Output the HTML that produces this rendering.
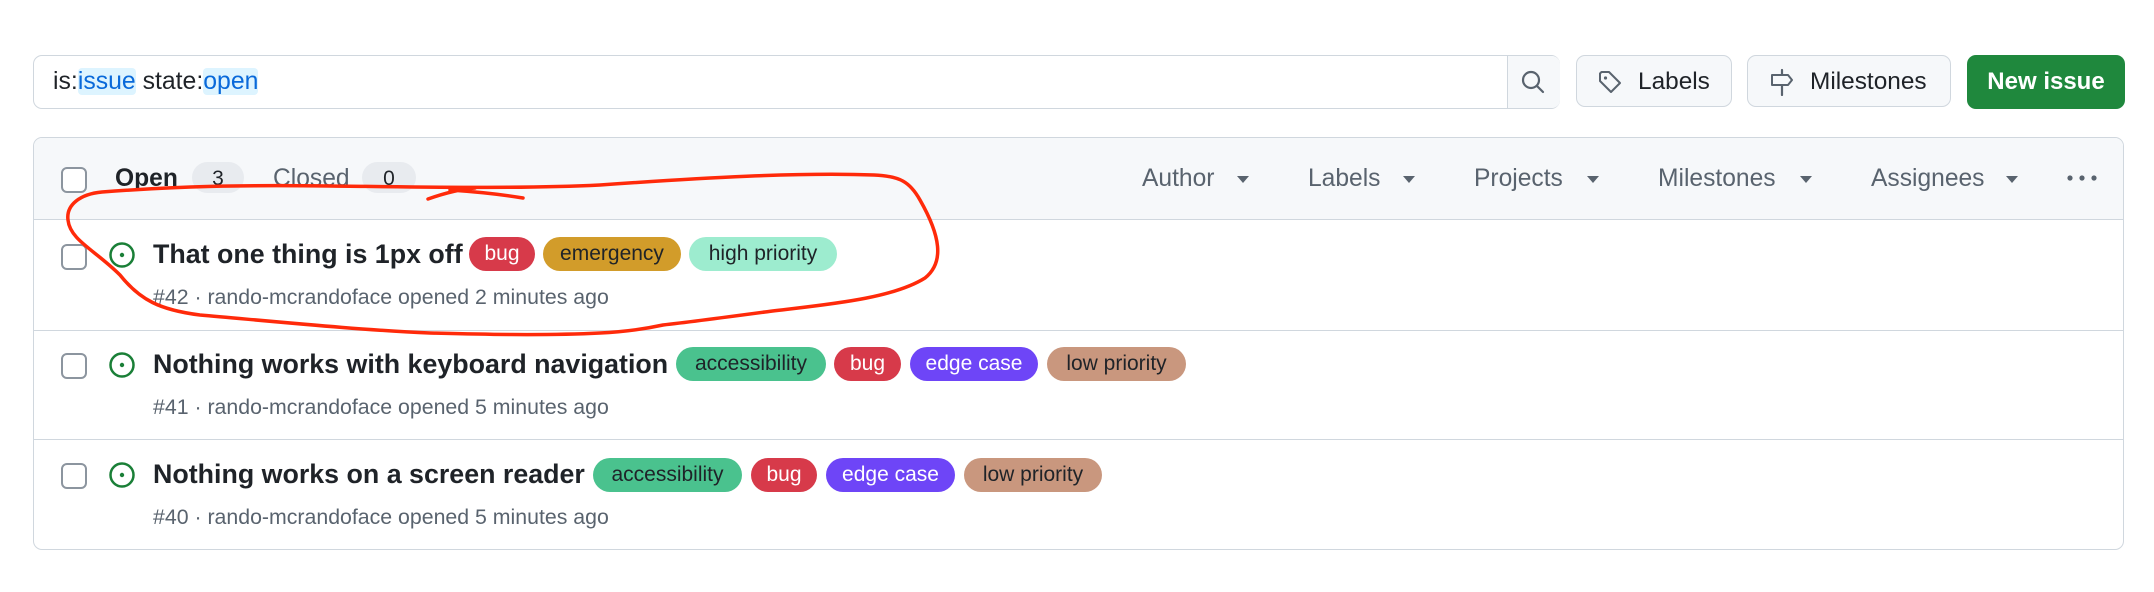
<!DOCTYPE html>
<html><head><meta charset="utf-8"><style>
html,body{margin:0;padding:0;background:#fff;width:2154px;height:592px;overflow:hidden;position:relative;font-family:"Liberation Sans",Arial,sans-serif;color:#1f2328}
.a{position:absolute;white-space:nowrap}
.btn{position:absolute;top:55px;height:52px;border:1px solid #d0d7de;border-radius:9px;background:#f6f8fa;box-sizing:border-box}
.lbl{position:absolute;height:34px;border-radius:17px;font-size:21px;line-height:34px;text-align:center;white-space:nowrap}
.cb{position:absolute;left:61px;width:26px;height:26px;border:2px solid #8c959f;border-radius:6px;box-sizing:border-box;background:#fff}
.ttl{position:absolute;left:153px;font-size:26.8px;font-weight:bold;white-space:nowrap;line-height:30px}
.meta{position:absolute;left:153px;font-size:21.3px;color:#59636e;white-space:nowrap;line-height:24px}
.hd{position:absolute;top:166px;font-size:24.6px;color:#59636e;line-height:26px;white-space:nowrap}
.car{position:absolute;top:176px;width:0;height:0;border-left:6px solid transparent;border-right:6px solid transparent;border-top:7px solid #59636e}
.cnt{position:absolute;top:162px;height:31px;border-radius:16px;background:#e8ebef;font-size:21px;line-height:33px;text-align:center;color:#1f2328}
</style></head><body>
<div class="a" style="left:33px;top:55px;width:1527px;height:54px;border:1px solid #d0d7de;border-radius:9px;box-sizing:border-box;background:#fff"></div>
<div class="a" style="left:1507px;top:56px;width:52px;height:52px;background:#f6f8fa;border-left:1px solid #d0d7de;border-radius:0 8px 8px 0"></div>
<svg class="a" style="left:1520px;top:69px" width="26" height="26" viewBox="0 0 26 26"><circle cx="11" cy="11" r="8" fill="none" stroke="#59636e" stroke-width="2.2"/><path d="M17 17l6 6" stroke="#59636e" stroke-width="2.2" stroke-linecap="round"/></svg>
<div class="a" style="left:53px;top:68px;font-size:24.8px;line-height:28px">is:<span style="color:#0969da;background:#ddf4ff;border-radius:4px">issue</span> state:<span style="color:#0969da;background:#ddf4ff;border-radius:4px">open</span></div>
<div class="btn" style="left:1576px;width:156px"></div>
<svg class="a" style="left:1597px;top:69px" width="26" height="26" viewBox="0 0 26 26"><path d="M3 4.5v7.5l11 11 9-9-11-11H4.5z" fill="none" stroke="#59636e" stroke-width="2" stroke-linejoin="round"/><circle cx="8.5" cy="9" r="1.6" fill="#59636e"/></svg>
<div class="a" style="left:1638px;top:68px;font-size:24.4px;line-height:28px">Labels</div>
<div class="btn" style="left:1747px;width:204px"></div>
<svg class="a" style="left:1768px;top:68px" width="28" height="28" viewBox="0 0 28 28"><path d="M14 2v4M14 18v9" stroke="#59636e" stroke-width="2.2" stroke-linecap="round"/><path d="M4 7h16l4 5-4 5H4z" fill="none" stroke="#59636e" stroke-width="2" stroke-linejoin="round"/></svg>
<div class="a" style="left:1810px;top:68px;font-size:24.4px;line-height:28px">Milestones</div>
<div class="a" style="left:1967px;top:55px;width:158px;height:54px;background:#1f883d;border-radius:9px;color:#fff;font-size:24px;font-weight:bold;line-height:54px;text-align:center">New issue</div>
<div class="a" style="left:33px;top:137px;width:2091px;height:413px;border:1px solid #d0d7de;border-radius:9px;box-sizing:border-box;overflow:hidden">
 <div style="height:81px;background:#f6f8fa;border-bottom:1px solid #d0d7de"></div>
 <div style="position:absolute;top:192px;left:0;right:0;border-top:1px solid #d0d7de"></div>
 <div style="position:absolute;top:301px;left:0;right:0;border-top:1px solid #d0d7de"></div>
</div>
<div class="cb" style="top:167px"></div>
<div class="hd" style="left:115px;color:#1f2328;font-weight:bold">Open</div>
<div class="cnt" style="left:192px;width:52px">3</div>
<div class="hd" style="left:273px">Closed</div>
<div class="cnt" style="left:362px;width:54px">0</div>
<div class="hd" style="left:1142px">Author</div><div class="car" style="left:1237px"></div>
<div class="hd" style="left:1308px">Labels</div><div class="car" style="left:1403px"></div>
<div class="hd" style="left:1474px">Projects</div><div class="car" style="left:1587px"></div>
<div class="hd" style="left:1658px">Milestones</div><div class="car" style="left:1800px"></div>
<div class="hd" style="left:1871px">Assignees</div><div class="car" style="left:2006px"></div>
<svg class="a" style="left:2066px;top:172px" width="32" height="12"><circle cx="4" cy="6" r="2.6" fill="#59636e"/><circle cx="16" cy="6" r="2.6" fill="#59636e"/><circle cx="28" cy="6" r="2.6" fill="#59636e"/></svg>
<svg width="0" height="0" style="position:absolute"><defs><g id="oi"><circle cx="14" cy="14" r="11.5" fill="none" stroke="#1a7f37" stroke-width="2.5"/><circle cx="14" cy="14" r="2.2" fill="#1a7f37"/></g></defs></svg>
<div class="cb" style="top:244px"></div>
<svg class="a" style="left:108px;top:241px" width="28" height="28"><use href="#oi"/></svg>
<div class="ttl" style="top:239px">That one thing is 1px off</div>
<div class="lbl" style="left:469px;top:237px;width:66px;background:#d73a4a;color:#fff">bug</div>
<div class="lbl" style="left:543px;top:237px;width:138px;background:#d29c2a;color:#1f2328">emergency</div>
<div class="lbl" style="left:689px;top:237px;width:148px;background:#9deccf;color:#1f2328">high priority</div>
<div class="meta" style="top:285px">#42 · rando-mcrandoface opened 2 minutes ago</div>
<div class="cb" style="top:353px"></div>
<svg class="a" style="left:108px;top:351px" width="28" height="28"><use href="#oi"/></svg>
<div class="ttl" style="top:349px">Nothing works with keyboard navigation</div>
<div class="lbl" style="left:676px;top:347px;width:150px;background:#4ac28e;color:#1f2328">accessibility</div>
<div class="lbl" style="left:834px;top:347px;width:67px;background:#d73a4a;color:#fff">bug</div>
<div class="lbl" style="left:910px;top:347px;width:128px;background:#6e45f7;color:#fff">edge case</div>
<div class="lbl" style="left:1047px;top:347px;width:139px;background:#c9977e;color:#1f2328">low priority</div>
<div class="meta" style="top:395px">#41 · rando-mcrandoface opened 5 minutes ago</div>
<div class="cb" style="top:463px"></div>
<svg class="a" style="left:108px;top:461px" width="28" height="28"><use href="#oi"/></svg>
<div class="ttl" style="top:459px">Nothing works on a screen reader</div>
<div class="lbl" style="left:593px;top:458px;width:149px;background:#4ac28e;color:#1f2328">accessibility</div>
<div class="lbl" style="left:751px;top:458px;width:66px;background:#d73a4a;color:#fff">bug</div>
<div class="lbl" style="left:826px;top:458px;width:129px;background:#6e45f7;color:#fff">edge case</div>
<div class="lbl" style="left:964px;top:458px;width:138px;background:#c9977e;color:#1f2328">low priority</div>
<div class="meta" style="top:505px">#40 · rando-mcrandoface opened 5 minutes ago</div>
<svg class="a" style="left:0;top:0" width="2154" height="592" viewBox="0 0 2154 592">
<path d="M102 192 C180 186 240 185 330 186 C420 187 520 189 600 185 C700 178 800 172 874 175 C900 176 910 182 920 200 C940 235 945 262 925 278 C890 300 820 305 765 312 C720 318 690 322 663 325 C640 330 620 332 600 333 C540 336 470 334 430 333 C360 330 280 322 200 315 C160 310 140 300 120 275 C95 250 70 240 68 220 C66 205 80 194 102 192" fill="none" stroke="#ff2a0a" stroke-width="3.5" stroke-linecap="round"/>
<path d="M428 199 C445 193 462 189 475 188 M450 190 C480 192 505 195 523 198" fill="none" stroke="#ff2a0a" stroke-width="3.5" stroke-linecap="round"/>
</svg>
</body></html>
